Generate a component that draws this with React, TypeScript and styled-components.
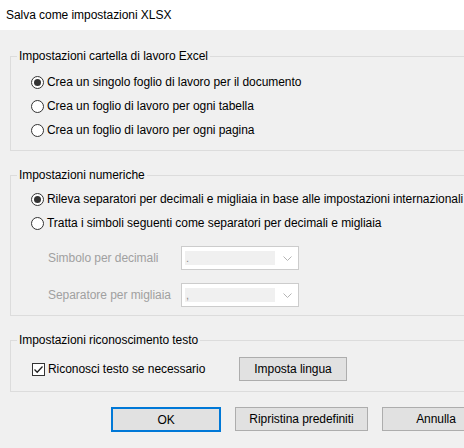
import React from 'react';
import styled, { createGlobalStyle } from 'styled-components';

const GlobalStyle = createGlobalStyle`
    html, body {
        margin: 0;
        padding: 0;
        width: 464px;
        height: 448px;
        overflow: hidden;
        background: #f0f0f0;
    }
    body {
        font-family: "Liberation Sans", Arial, sans-serif;
        font-size: 12px;
        letter-spacing: -0.05px;
        color: #000;
    }
`;

const Window = styled.div`
    width: 500px;
    height: 448px;
    display: flex;
    flex-direction: column;
    background: #f0f0f0;
`;

const TitleBar = styled.div`
    height: 30px;
    flex: none;
    display: flex;
    align-items: center;
    padding-left: 6px;
    background: #fff;
`;

const Body = styled.div`
    display: flex;
    flex-direction: column;
    padding: 18px 10px 0 10px;
`;

const Group = styled.fieldset<{ $gap: number }>`
    margin: 0 0 ${p => p.$gap}px 0;
    padding: 0;
    border: 1px solid #dcdcdc;
    min-width: 0;
    legend {
        margin-left: 6px;
        padding: 0 2px;
        line-height: 16px;
    }
`;

const Rows = styled.div<{ $top: number; $bottom: number }>`
    display: flex;
    flex-direction: column;
    padding: ${p => p.$top}px 0 ${p => p.$bottom}px 20px;
`;

const OptionRow = styled.label<{ $width?: number }>`
    height: 24px;
    display: flex;
    align-items: center;
    gap: 3px;
    white-space: nowrap;
    ${p => (p.$width ? `width: ${p.$width}px;` : '')}
`;

const RadioDot = styled.span<{ $checked?: boolean }>`
    width: 13px;
    height: 13px;
    box-sizing: border-box;
    border: 1px solid #333;
    border-radius: 50%;
    background: #fff;
    flex: none;
    display: flex;
    align-items: center;
    justify-content: center;
    &::after {
        content: '';
        width: 7px;
        height: 7px;
        border-radius: 50%;
        background: ${p => (p.$checked ? '#333' : 'transparent')};
    }
`;

const CheckBox = styled.span`
    width: 13px;
    height: 13px;
    box-sizing: border-box;
    border: 1px solid #333;
    background: #fff;
    flex: none;
    display: flex;
    align-items: center;
    justify-content: center;
    margin-left: 1px;
`;

const FieldRow = styled.div<{ $top: number }>`
    display: grid;
    grid-template-columns: 133px 118px;
    align-items: center;
    margin-top: ${p => p.$top}px;
    padding-left: 17px;
    color: #a0a0a0;
`;

const Combo = styled.div`
    height: 24px;
    box-sizing: border-box;
    border: 1px solid #cccccc;
    background: #fff;
    display: flex;
    align-items: center;
    padding: 0 6px 0 3px;
    gap: 8px;
`;

const ComboValue = styled.div`
    flex: 1;
    height: 14px;
    background: #f0f0f0;
    color: #8a8a8a;
    font-size: 11px;
    line-height: 14px;
    padding-left: 1px;
`;

const CheckLine = styled.div`
    display: flex;
    align-items: center;
    height: 24px;
`;

const Button = styled.button<{ $width: number; $primary?: boolean }>`
    width: ${p => p.$width}px;
    height: ${p => (p.$primary ? 25 : 24)}px;
    box-sizing: border-box;
    background: #e1e1e1;
    border: ${p => (p.$primary ? '2px solid #0078d7' : '1px solid #adadad')};
    font-family: inherit;
    font-size: 12px;
    letter-spacing: inherit;
    color: #000;
    padding: 0;
    flex: none;
`;

const ButtonBar = styled.div`
    display: flex;
    justify-content: flex-end;
    align-items: flex-start;
    gap: 14px;
`;

const Radio = ({ checked, children }: { checked?: boolean; children: React.ReactNode }) => (
    <OptionRow>
        <RadioDot $checked={checked} />
        {children}
    </OptionRow>
);

const Chevron = () => (
    <svg width="9" height="5" viewBox="0 0 9 5">
        <path d="M0.5 0.5 L4.5 4.5 L8.5 0.5" fill="none" stroke="#b4b4b4" strokeWidth="1" />
    </svg>
);

const CheckMark = () => (
    <svg width="11" height="11" viewBox="0 0 11 11">
        <path d="M1.5 5.5 L4.2 8.3 L9.5 2.5" fill="none" stroke="#222" strokeWidth="1.3" />
    </svg>
);

export default function App() {
    return <>
        <GlobalStyle />
        <Window>
            <TitleBar>Salva come impostazioni XLSX</TitleBar>
            <Body>
                <Group $gap={16}>
                    <legend>Impostazioni cartella di lavoro Excel</legend>
                    <Rows $top={6} $bottom={8}>
                        <Radio checked>Crea un singolo foglio di lavoro per il documento</Radio>
                        <Radio>Crea un foglio di lavoro per ogni tabella</Radio>
                        <Radio>Crea un foglio di lavoro per ogni pagina</Radio>
                    </Rows>
                </Group>
                <Group $gap={16}>
                    <legend>Impostazioni numeriche</legend>
                    <Rows $top={4} $bottom={8}>
                        <Radio checked>Rileva separatori per decimali e migliaia in base alle impostazioni internazionali</Radio>
                        <Radio>Tratta i simboli seguenti come separatori per decimali e migliaia</Radio>
                        <FieldRow $top={11}>
                            <span>Simbolo per decimali</span>
                            <Combo><ComboValue>.</ComboValue><Chevron /></Combo>
                        </FieldRow>
                        <FieldRow $top={13}>
                            <span>Separatore per migliaia</span>
                            <Combo><ComboValue>,</ComboValue><Chevron /></Combo>
                        </FieldRow>
                    </Rows>
                </Group>
                <Group $gap={15}>
                    <legend>Impostazioni riconoscimento testo</legend>
                    <Rows $top={9} $bottom={10}>
                        <CheckLine>
                            <OptionRow $width={208}>
                                <CheckBox><CheckMark /></CheckBox>
                                Riconosci testo se necessario
                            </OptionRow>
                            <Button $width={108}>Imposta lingua</Button>
                        </CheckLine>
                    </Rows>
                </Group>
                <ButtonBar>
                    <Button $width={110} $primary>OK</Button>
                    <Button $width={133}>Ripristina predefiniti</Button>
                    <Button $width={108}>Annulla</Button>
                </ButtonBar>
            </Body>
        </Window>
    </>;
}
